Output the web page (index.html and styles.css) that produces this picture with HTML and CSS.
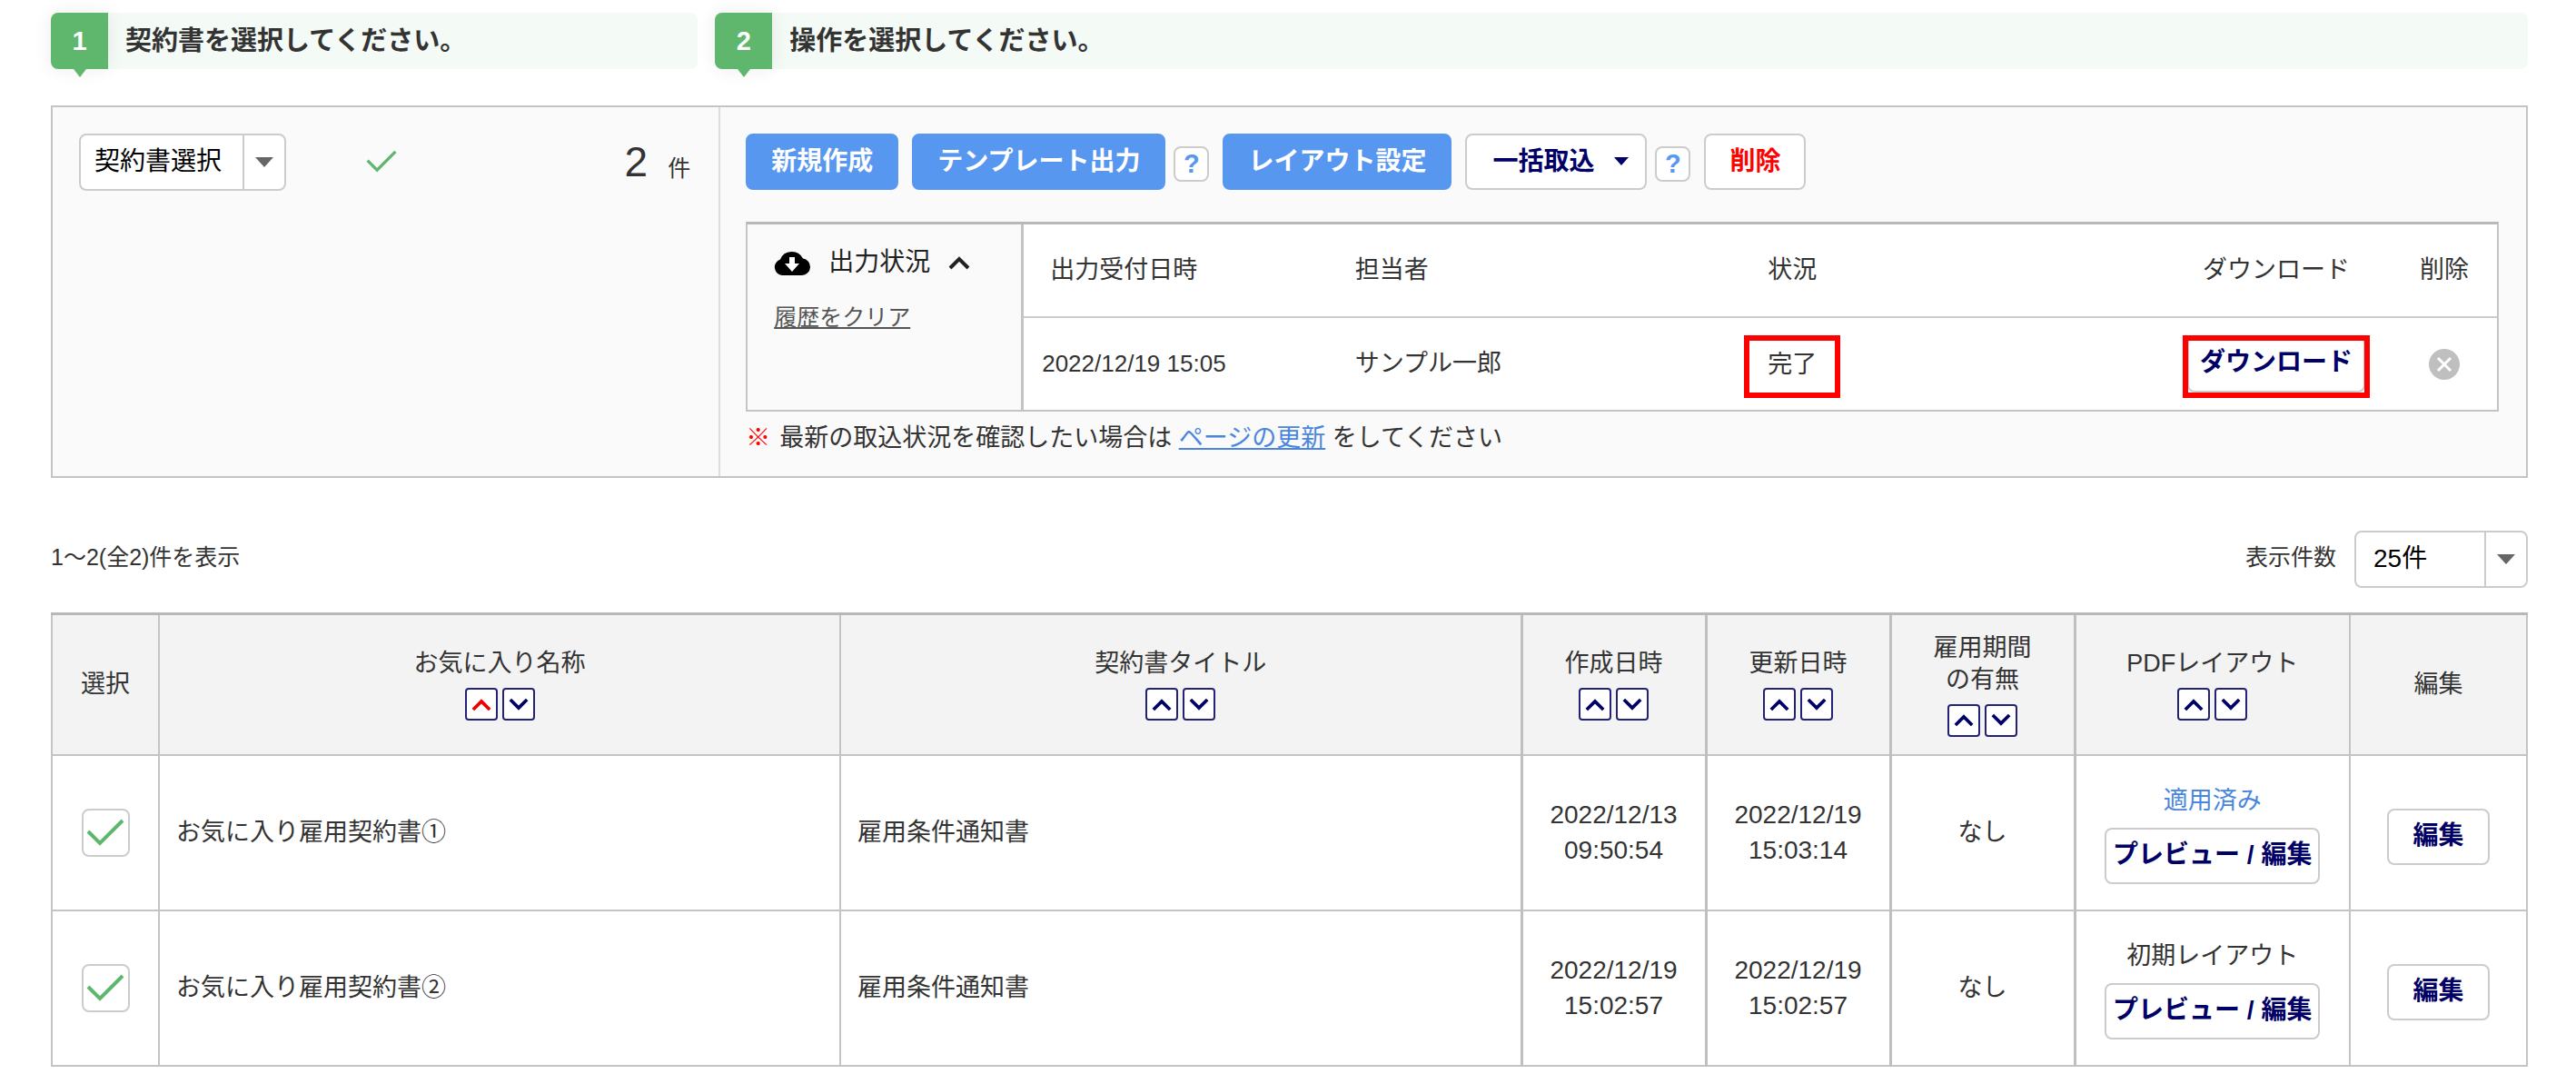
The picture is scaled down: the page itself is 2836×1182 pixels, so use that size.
FILE: index.html
```html
<!DOCTYPE html>
<html lang="ja">
<head>
<meta charset="utf-8">
<title>雇用契約書</title>
<link rel="stylesheet" href="styles.css">
</head>
<body>
<svg class="sprite" aria-hidden="true">
  <symbol id="up" viewBox="0 0 24 16"><path d="M2 14 12 4l10 10" fill="none" stroke="currentColor" stroke-width="4"/></symbol>
  <symbol id="down" viewBox="0 0 24 16"><path d="M2 2 12 12 22 2" fill="none" stroke="currentColor" stroke-width="4"/></symbol>
  <symbol id="check" viewBox="0 0 42 30"><path d="M2 14 15 27 40 2" fill="none" stroke="currentColor" stroke-width="4"/></symbol>
  <symbol id="caret" viewBox="0 0 20 11"><path d="M0 0h20L10 11z" fill="currentColor"/></symbol>
</svg>
<main class="page">
  <ol class="steps">
    <li class="step"><span class="step-no">1</span><span class="step-text">契約書を選択してください。</span></li>
    <li class="step"><span class="step-no">2</span><span class="step-text">操作を選択してください。</span></li>
  </ol>

  <section class="panel">
    <div class="pick">
      <div class="dropdown">
        <select class="dropdown-field" aria-label="契約書選択"><option>契約書選択</option></select>
        <span class="dropdown-arrow"><svg class="caret"><use href="#caret"/></svg></span>
      </div>
      <svg class="pick-check"><use href="#check"/></svg>
      <p class="count"><span class="count-no">2</span>件</p>
    </div>

    <div class="work">
      <div class="actions">
        <button class="btn primary">新規作成</button>
        <button class="btn primary">テンプレート出力</button>
        <button class="help">?</button>
        <button class="btn primary">レイアウト設定</button>
        <button class="btn menu">一括取込<svg class="menu-caret"><use href="#caret"/></svg></button>
        <button class="help">?</button>
        <button class="btn danger">削除</button>
      </div>

      <div class="status">
        <div class="status-side">
          <div class="status-title">
            <svg class="cloud" viewBox="0 0 40 28"><path d="M9 28a9 9 0 0 1-2-17.500A13.500 13 0 0 1 32 9.500 9.300 9.300 0 0 1 31 28z" fill="#000"/><path d="M17 8h6v7h5l-8 9-8-9h5z" fill="#fff"/></svg>
            <span>出力状況</span>
            <svg class="chevron"><use href="#up"/></svg>
          </div>
          <a class="clear" href="#">履歴をクリア</a>
        </div>
        <table class="jobs">
          <colgroup><col class="j-date"><col class="j-user"><col><col class="j-down"><col class="j-del"></colgroup>
          <thead><tr><th>出力受付日時</th><th>担当者</th><th>状況</th><th class="mid">ダウンロード</th><th class="mid">削除</th></tr></thead>
          <tbody><tr>
            <td class="job-date">2022/12/19 15:05</td>
            <td>サンプル一郎</td>
            <td><span class="mark mark-text">完了</span></td>
            <td class="mid"><span class="mark mark-button"><button class="btn download">ダウンロード</button></span></td>
            <td class="mid"><button class="remove" aria-label="削除"><svg class="remove-icon" viewBox="0 0 34 34"><circle cx="17" cy="17" r="17" fill="#bfbfbf"/><path d="M10 10l14 14M24 10 10 24" stroke="#fff" stroke-width="3"/></svg></button></td>
          </tr></tbody>
        </table>
      </div>
      <p class="note"><span class="note-mark">※</span><span>最新の取込状況を確認したい場合は <a class="reload" href="#">ページの更新</a> をしてください</span></p>
    </div>
  </section>

  <div class="pager">
    <p class="range">1〜2(全2)件を表示</p>
    <label class="per-label" for="per">表示件数</label>
    <div class="dropdown per">
      <select class="dropdown-field" id="per"><option>25件</option></select>
      <span class="dropdown-arrow"><svg class="caret"><use href="#caret"/></svg></span>
    </div>
  </div>

  <table class="list">
    <colgroup><col class="c-pick"><col><col><col class="c-date"><col class="c-date"><col class="c-date"><col class="c-pdf"><col class="c-edit"></colgroup>
    <thead><tr>
      <th>選択</th>
      <th>お気に入り名称<span class="sorts"><button class="sort on" aria-label="昇順"><svg class="sort-icon"><use href="#up"/></svg></button><button class="sort" aria-label="降順"><svg class="sort-icon"><use href="#down"/></svg></button></span></th>
      <th>契約書タイトル<span class="sorts"><button class="sort" aria-label="昇順"><svg class="sort-icon"><use href="#up"/></svg></button><button class="sort" aria-label="降順"><svg class="sort-icon"><use href="#down"/></svg></button></span></th>
      <th class="thick">作成日時<span class="sorts"><button class="sort" aria-label="昇順"><svg class="sort-icon"><use href="#up"/></svg></button><button class="sort" aria-label="降順"><svg class="sort-icon"><use href="#down"/></svg></button></span></th>
      <th class="thick">更新日時<span class="sorts"><button class="sort" aria-label="昇順"><svg class="sort-icon"><use href="#up"/></svg></button><button class="sort" aria-label="降順"><svg class="sort-icon"><use href="#down"/></svg></button></span></th>
      <th class="thick">雇用期間<br>の有無<span class="sorts"><button class="sort" aria-label="昇順"><svg class="sort-icon"><use href="#up"/></svg></button><button class="sort" aria-label="降順"><svg class="sort-icon"><use href="#down"/></svg></button></span></th>
      <th class="thick">PDFレイアウト<span class="sorts"><button class="sort" aria-label="昇順"><svg class="sort-icon"><use href="#up"/></svg></button><button class="sort" aria-label="降順"><svg class="sort-icon"><use href="#down"/></svg></button></span></th>
      <th>編集</th>
    </tr></thead>
    <tbody>
      <tr>
        <td><label class="tick"><input class="tick-box" type="checkbox" checked aria-label="お気に入り雇用契約書①"><svg class="tick-mark"><use href="#check"/></svg></label></td>
        <td class="left">お気に入り雇用契約書①</td>
        <td class="left">雇用条件通知書</td>
        <td class="thick date">2022/12/13<br>09:50:54</td>
        <td class="thick date">2022/12/19<br>15:03:14</td>
        <td class="thick">なし</td>
        <td class="thick"><div class="layout"><span class="applied">適用済み</span><button class="btn preview">プレビュー / 編集</button></div></td>
        <td><button class="btn edit">編集</button></td>
      </tr>
      <tr>
        <td><label class="tick"><input class="tick-box" type="checkbox" checked aria-label="お気に入り雇用契約書②"><svg class="tick-mark"><use href="#check"/></svg></label></td>
        <td class="left">お気に入り雇用契約書②</td>
        <td class="left">雇用条件通知書</td>
        <td class="thick date">2022/12/19<br>15:02:57</td>
        <td class="thick date">2022/12/19<br>15:02:57</td>
        <td class="thick">なし</td>
        <td class="thick"><div class="layout"><span>初期レイアウト</span><button class="btn preview">プレビュー / 編集</button></div></td>
        <td><button class="btn edit">編集</button></td>
      </tr>
    </tbody>
  </table>
</main>
</body>
</html>
```
FILE: styles.css
```css
* { box-sizing: border-box; }
body {
  margin: 0;
  background: #fff;
  color: #333;
  font: 27px/35px "Liberation Sans", "Noto Sans CJK JP", sans-serif;
}
p, ol { margin: 0; padding: 0; }
button, select { font: inherit; cursor: pointer; }
.sprite { display: none; }
.page { padding: 14px 53px 8px 56px; }

/* steps */
.steps {
  display: grid;
  grid-template-columns: calc(27% - 24px) 1fr;
  gap: 19px;
  list-style: none;
}
.step {
  display: flex;
  align-items: center;
  gap: 19px;
  height: 62px;
  border-radius: 8px;
  background: #f4faf5;
  font-size: 29px;
  font-weight: bold;
}
.step-no {
  position: relative;
  width: 63px;
  line-height: 62px;
  border-radius: 8px 0 0 8px;
  background: #5fb76d;
  box-shadow: 0 0 20px rgba(0, 0, 0, .08);
  color: #fff;
  text-align: center;
}
.step-no::after {
  content: "";
  position: absolute;
  top: 100%;
  left: 50%;
  margin-left: -7px;
  border: 7px solid transparent;
  border-top: 9px solid #5fb76d;
  border-bottom: 0;
}

/* operation panel */
.panel {
  display: grid;
  grid-template-columns: 27% 1fr;
  margin-top: 40px;
  border: 2px solid #c4c4c4;
  background: #fafafa;
}
.pick {
  display: flex;
  align-items: flex-start;
  padding: 29px 31px 29px 29px;
  border-right: 2px solid #ddd;
}
.pick-check { width: 34px; height: 25px; margin: 18px 0 0 88px; color: #5fb76d; }
.count {
  display: flex;
  align-items: baseline;
  gap: 22px;
  margin-left: auto;
  font-size: 25px;
  line-height: 62px;
}
.count-no { font-size: 46px; }

.dropdown {
  display: grid;
  grid-template-columns: 1fr 46px;
  width: 228px;
  height: 63px;
  border: 2px solid #ccc;
  border-radius: 8px;
  background: #fff;
  color: #000;
}
.dropdown-field {
  grid-area: 1 / 1 / 2 / 3;
  appearance: none;
  padding: 0 0 2px 15px;
  border: 0;
  background: none;
  color: inherit;
  font-size: 28px;
}
.dropdown-arrow {
  grid-area: 1 / 2;
  display: grid;
  place-items: center;
  border-left: 2px solid #ccc;
  color: #666;
  pointer-events: none;
}
.caret { width: 20px; height: 11px; }

.work { padding: 29px 30px 24px 28px; }
.actions { display: flex; align-items: center; gap: 15px; }
.btn {
  height: 62px;
  padding: 0 26px 4px;
  border: 2px solid #ccc;
  border-radius: 8px;
  background: #fff;
  color: #006;
  font-size: 28px;
  font-weight: bold;
  white-space: nowrap;
}
.actions .btn { padding-bottom: 2px; }
.btn.primary { border-color: #5897f0; background: #5897f0; color: #fff; }
.btn.danger { color: #f00; }
.btn.menu {
  display: flex;
  align-items: center;
  gap: 22px;
  padding: 0 18px 2px 28px;
}
.menu-caret { width: 16px; height: 9px; }
.help {
  width: 39px;
  height: 39px;
  margin: 4px 0 0 -6px;
  padding: 0;
  border: 2px solid #ccc;
  border-radius: 8px;
  background: #fff;
  color: #5897f0;
  font-size: 29px;
  font-weight: bold;
  line-height: 35px;
}

.status {
  display: grid;
  grid-template-columns: 301px 1fr;
  margin-top: 35px;
  border: 2px solid #c4c4c4;
  border-top: 3px solid #b8b8b8;
}
.status-side { padding: 24px 0 0 29px; }
.status-title {
  display: flex;
  align-items: center;
  gap: 20px;
  color: #222;
  font-size: 28px;
}
.cloud { width: 40px; height: 28px; }
.chevron { width: 24px; height: 16px; }
.clear {
  display: inline-block;
  margin-top: 26px;
  color: #555;
  font-size: 25px;
}
.jobs {
  width: 100%;
  table-layout: fixed;
  border-collapse: collapse;
  border-left: 3px solid #c4c4c4;
  background: #fff;
}
.jobs th, .jobs td {
  height: 102px;
  padding: 0 20px;
  font-weight: normal;
  text-align: left;
}
.jobs th { border-bottom: 2px solid #ccc; }
.jobs th:first-child { padding-left: 29px; }
.jobs .mid { padding: 0; text-align: center; }
.jobs .job-date { font-size: 26px; }
.j-date { width: 346px; }
.j-user { width: 28%; }
.j-down { width: 254px; }
.j-del { width: 116px; }
.mark { position: relative; display: inline-block; vertical-align: middle; }
.mark::after {
  content: "";
  position: absolute;
  border: 6px solid #f00;
  pointer-events: none;
}
.mark-text::after { inset: -15px -26px -19px; }
.mark-button::after { inset: -1px -5px -6px; }
.btn.download { display: block; padding: 0 12px 4px; }
.remove { display: block; margin: 0 auto; padding: 0; border: 0; background: none; }
.remove-icon { display: block; width: 34px; height: 34px; }
.note { display: flex; gap: 10px; margin-top: 12px; }
.note-mark { color: #f00; font-weight: bold; }
.reload { color: #4a86e0; }

/* pager */
.pager {
  display: flex;
  align-items: center;
  margin: 58px 0 27px;
  font-size: 25px;
}
.range { flex: 1; }
.range, .per-label { padding-bottom: 4px; }
.per { width: 191px; margin-left: 20px; }
.per .dropdown-field { padding-left: 19px; }

/* contract list */
.list {
  width: 100%;
  table-layout: fixed;
  border-collapse: collapse;
  border-top: 3px solid #b8b8b8;
}
.list th, .list td {
  height: 171px;
  padding: 0;
  border: 2px solid #c4c4c4;
  font-weight: normal;
  text-align: center;
}
.list th { height: 155px; border-top: 3px solid #b8b8b8; background: #f3f3f3; }
.list .thick { border-left: 3px solid #bfbfbf; }
.list .left { padding-left: 18px; text-align: left; }
.list .date { font-size: 28px; line-height: 39px; }
.c-pick { width: 118px; }
.c-date { width: 203px; }
.c-pdf { width: 303px; }
.c-edit { width: 195px; }
.sorts { display: flex; justify-content: center; gap: 5px; margin-top: 9px; }
.sort {
  display: grid;
  place-items: center;
  width: 36px;
  height: 36px;
  padding: 0;
  border: 2px solid #227;
  border-radius: 4px;
  background: #fff;
  color: #006;
}
.sort.on { color: #e00; }
.sort-icon { width: 22px; height: 15px; }
.tick { display: inline-grid; place-items: center; vertical-align: middle; }
.tick-box {
  grid-area: 1 / 1;
  appearance: none;
  width: 53px;
  height: 53px;
  margin: 0;
  border: 2px solid #ccc;
  border-radius: 8px;
  background: #fff;
}
.tick-mark { grid-area: 1 / 1; width: 42px; height: 30px; color: #5fb76d; pointer-events: none; }
.layout { display: grid; justify-items: center; gap: 12px; padding-top: 5px; }
.applied { color: #4a86e0; }
.btn.preview { padding: 0 7px 4px; }
.btn.edit { margin-top: 10px; }
```
